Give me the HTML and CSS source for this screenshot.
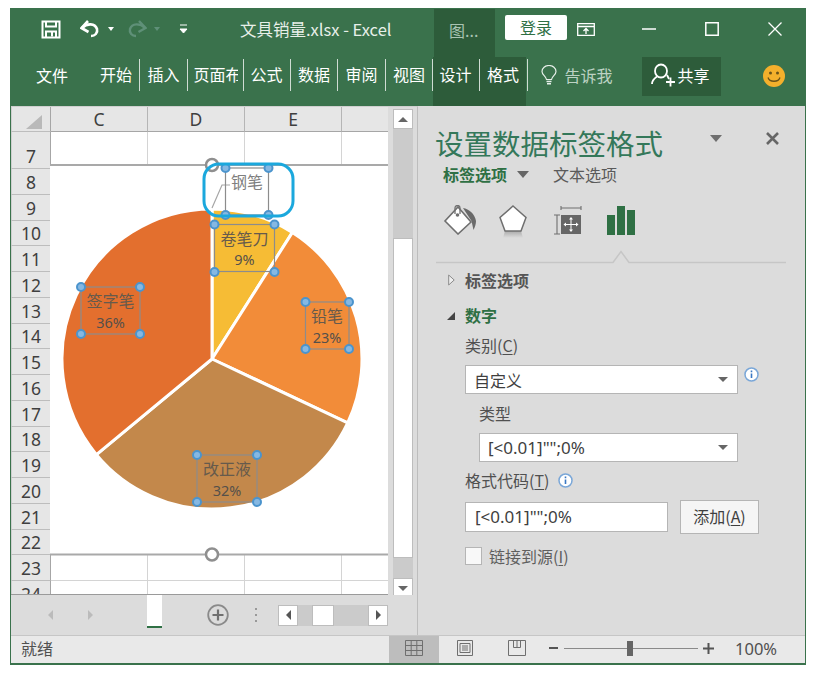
FILE: index.html
```html
<!DOCTYPE html>
<html lang="zh">
<head>
<meta charset="utf-8">
<title>文具销量.xlsx - Excel</title>
<link rel="stylesheet" href="styles.css">
</head>
<body>
<div class="window">
  <header class="titlebar">
    <svg class="qa-save" width="20" height="19" viewBox="0 0 20 19"><path d="M1.500 1.500h17v16h-17z" fill="none" stroke="#fff" stroke-width="2"/><path d="M5 1.500v5h10v-5" fill="none" stroke="#fff" stroke-width="2"/><path d="M5 17.500v-6h10v6M11 12.500v4" fill="none" stroke="#fff" stroke-width="2"/></svg>
    <svg class="qa-undo" width="21" height="18" viewBox="0 0 21 18"><path d="M2 8c5-5 13-5 15 1 1 4-2 7-6 7" fill="none" stroke="#fff" stroke-width="2.600"/><path d="M8 1L1.500 8l7 4" fill="none" stroke="#fff" stroke-width="2.600"/></svg>
    <i class="caret qa-caret"></i>
    <svg class="qa-redo" width="21" height="18" viewBox="0 0 21 18"><path d="M19 8C14 3 6 3 4 9c-1 4 2 7 6 7" fill="none" stroke="#5f9078" stroke-width="2.400"/><path d="M13 1l6.500 7-7 4" fill="none" stroke="#5f9078" stroke-width="2.400"/></svg>
    <i class="caret caret-dim qa-caret"></i>
    <svg class="qa-custom" width="9" height="10" viewBox="0 0 9 10"><path d="M1 1h7M1 5h7L4.500 9z" fill="#fff" stroke="#fff"/></svg>
    <div class="doc-title">文具销量.xlsx - Excel</div>
    <div class="context-tab">图...</div>
    <div class="login">登录</div>
    <svg class="win-display" width="18" height="13" viewBox="0 0 18 13"><path d="M.7.700h16.600v11.600H.7zM.7 3.500h16.600M9 11V6M6.500 8l2.500-2.500L11.500 8" fill="none" stroke="#fff" stroke-width="1.300"/></svg>
    <svg class="win-min" width="14" height="2" viewBox="0 0 14 2"><path d="M0 1h14" stroke="#fff" stroke-width="1.500"/></svg>
    <svg class="win-max" width="14" height="14" viewBox="0 0 14 14"><path d="M.8.800h12.400v12.400H.8z" fill="none" stroke="#fff" stroke-width="1.500"/></svg>
    <svg class="win-close" width="14" height="14" viewBox="0 0 14 14"><path d="M.5.500l13 13M13.500.500l-13 13" stroke="#fff" stroke-width="1.300"/></svg>
  </header>
  <nav class="ribbon">
    <span class="rtab rtab-file">文件</span>
    <span class="rtab rtab-sep">开始</span>
    <span class="rtab rtab-sep">插入</span>
    <span class="rtab rtab-sep rtab-page"><span class="clip">页面布</span></span>
    <span class="rtab rtab-sep">公式</span>
    <span class="rtab rtab-sep">数据</span>
    <span class="rtab rtab-sep">审阅</span>
    <span class="rtab rtab-sep">视图</span>
    <span class="context-group">
      <span class="rtab rtab-sep rtab-ctx">设计</span>
      <span class="rtab rtab-sep rtab-ctx">格式</span>
    </span>
    <svg class="bulb" width="16" height="20" viewBox="0 0 16 20"><path d="M5.500 14.500C5 11 1 10 1 6.500a7 6 0 0 1 14 0C15 10 11 11 10.500 14.500z" fill="none" stroke="#e6efe9" stroke-width="1.200"/><path d="M5.500 16.500h5M6 18.800h4" stroke="#e6efe9" stroke-width="1.400"/></svg>
    <span class="tell">告诉我</span>
    <span class="share">
      <svg width="26" height="24" viewBox="0 0 26 24"><ellipse cx="10" cy="8" rx="6" ry="6.500" fill="none" stroke="#fff" stroke-width="1.800"/><path d="M1 21c0-4 3-6 5-7.500M16 12l2 4" fill="none" stroke="#fff" stroke-width="1.800"/><path d="M15 19h9M19.500 14.500v9" stroke="#fff" stroke-width="1.800"/></svg>
      共享
    </span>
    <svg class="smile" width="22" height="22" viewBox="0 0 22 22"><circle cx="11" cy="11" r="11" fill="#f4b02c"/><circle cx="7.500" cy="8" r="1.500" fill="#6b5218"/><circle cx="14.500" cy="8" r="1.500" fill="#6b5218"/><path d="M5 12.500c1.500 5 10.500 5 12 0" fill="none" stroke="#6b5218" stroke-width="1.300"/></svg>
  </nav>

  <div class="workspace">
    <section class="sheet">
      <div class="sheet-top">
        <div class="grid-area">
          <div class="row row-head">
            <div class="rh corner"><svg width="16" height="14" viewBox="0 0 16 14"><path d="M16 0v14H0z" fill="#b9b9b9"/></svg></div>
            <div class="cell ch">C</div><div class="cell ch">D</div><div class="cell ch">E</div><div class="cell ch ch-last"></div>
          </div>
          <div class="row row-7"><div class="rh">7</div><div class="cell"></div><div class="cell"></div><div class="cell"></div><div class="cell cell-last"></div></div>
          <div class="row"><div class="rh">8</div></div>
          <div class="row"><div class="rh">9</div></div>
          <div class="row"><div class="rh">10</div></div>
          <div class="row"><div class="rh">11</div></div>
          <div class="row"><div class="rh">12</div></div>
          <div class="row"><div class="rh">13</div></div>
          <div class="row"><div class="rh">14</div></div>
          <div class="row"><div class="rh">15</div></div>
          <div class="row"><div class="rh">16</div></div>
          <div class="row"><div class="rh">17</div></div>
          <div class="row"><div class="rh">18</div></div>
          <div class="row"><div class="rh">19</div></div>
          <div class="row"><div class="rh">20</div></div>
          <div class="row"><div class="rh">21</div></div>
          <div class="row"><div class="rh">22</div></div>
          <div class="row"><div class="rh">23</div><div class="cell"></div><div class="cell"></div><div class="cell"></div><div class="cell cell-last"></div></div>
          <div class="row"><div class="rh">24</div><div class="cell"></div><div class="cell"></div><div class="cell"></div><div class="cell cell-last"></div></div>

          <svg class="chart" width="338" height="390" viewBox="50 165 338 390">
            <rect x="50" y="165" width="338" height="390" fill="#fff"/>
            <path d="M50 165h338M50 554.500h338" stroke="#a9a9a9" stroke-width="2"/>
            <g stroke="#fff" stroke-width="3">
              <path d="M212 359V209A150 150 0 0 1 292.400 232.400z" fill="#f6bc35"/>
              <path d="M212 359L292.400 232.400A150 150 0 0 1 347.700 422.900z" fill="#f28c39"/>
              <path d="M212 359L347.700 422.900A150 150 0 0 1 96.400 454.600z" fill="#c3884b"/>
              <path d="M212 359L96.400 454.600A150 150 0 0 1 212 209z" fill="#e36f2e"/>
            </g>
            <path d="M212 208l10-23h8" fill="none" stroke="#a6a6a6" stroke-width="1.200"/>
            <g class="lbl-boxes">
              <rect x="225.500" y="168" width="43" height="47"/>
              <rect x="214.500" y="224.500" width="60" height="47"/>
              <rect x="81" y="287" width="59" height="47"/>
              <rect x="305.500" y="302" width="43.500" height="47"/>
              <rect x="197" y="455" width="60" height="47"/>
            </g>
            <g class="lbl">
              <text class="lbl-grey" x="247" y="188">钢笔</text>
              <text x="244.500" y="245">卷笔刀</text>
              <text class="num" x="244.500" y="265">9%</text>
              <text x="110.500" y="307">签字笔</text>
              <text class="num" x="110.500" y="328">36%</text>
              <text x="327" y="322">铅笔</text>
              <text class="num" x="327" y="343">23%</text>
              <text x="227" y="475">改正液</text>
              <text class="num" x="227" y="496">32%</text>
            </g>
            <g class="handles">
              <circle cx="225.500" cy="168" r="4"/><circle cx="268.500" cy="168" r="4"/><circle cx="225.500" cy="215" r="4"/><circle cx="268.500" cy="215" r="4"/>
              <circle cx="214.500" cy="224.500" r="4"/><circle cx="274.500" cy="224.500" r="4"/><circle cx="214.500" cy="272" r="4"/><circle cx="274.500" cy="272" r="4"/>
              <circle cx="81" cy="287" r="4"/><circle cx="140" cy="287" r="4"/><circle cx="81" cy="334" r="4"/><circle cx="140" cy="334" r="4"/>
              <circle cx="305.500" cy="302" r="4"/><circle cx="349" cy="302" r="4"/><circle cx="305.500" cy="349" r="4"/><circle cx="349" cy="349" r="4"/>
              <circle cx="197" cy="455" r="4"/><circle cx="257" cy="455" r="4"/><circle cx="197" cy="502" r="4"/><circle cx="257" cy="502" r="4"/>
            </g>
            <circle class="rot" cx="212" cy="165" r="6"/>
            <circle class="rot" cx="212" cy="554.500" r="6"/>
            <rect x="204" y="164" width="89" height="52" rx="15" fill="none" stroke="#1ba8dd" stroke-width="3"/>
          </svg>
        </div>
        <div class="vscroll">
          <div class="sb-btn"><i class="tri tri-up"></i></div>
          <div class="vtrack"><div class="vthumb"></div></div>
          <div class="sb-btn"><i class="tri tri-down"></i></div>
        </div>
      </div>
      <div class="tabbar">
        <i class="nav-tri nav-left"></i>
        <i class="nav-tri nav-right"></i>
        <div class="sheet-tab"></div>
        <svg class="add-sheet" width="22" height="22" viewBox="0 0 22 22"><circle cx="11" cy="11" r="9.800" fill="none" stroke="#8a8a8a" stroke-width="1.800"/><path d="M11 5.500v11M5.500 11h11" stroke="#6f6f6f" stroke-width="2.200"/></svg>
        <div class="split-dots"><i></i><i></i><i></i></div>
        <div class="hscroll">
          <div class="hbtn"><i class="tri tri-left"></i></div>
          <div class="hthumb"></div>
          <div class="hbtn"><i class="tri tri-right"></i></div>
        </div>
      </div>
    </section>

    <aside class="pane">
      <div class="pane-head">
        <h1>设置数据标签格式</h1>
        <i class="tri-pane"></i>
        <svg class="pane-close" width="13" height="13" viewBox="0 0 13 13"><path d="M1 1l11 11M12 1L1 12" stroke="#666" stroke-width="2.600"/></svg>
      </div>
      <div class="pane-tabs">
        <span class="ptab-on">标签选项</span><i class="tri-tab"></i><span class="ptab-off">文本选项</span>
      </div>
      <div class="pane-icons">
        <svg class="ic-fill" width="34" height="30" viewBox="0 0 34 30"><path d="M20 3c6 1 12 6 13 13 0 3-1 6-2.500 9l-2-9z" fill="#6a6a6a"/><path d="M15 2l13 15-13 12L2 16z" fill="#fff" stroke="#6f6f6f" stroke-width="1.600"/><path d="M12 9V3a2.500 2.500 0 0 1 5 0v6" fill="none" stroke="#6f6f6f" stroke-width="1.300"/><circle cx="14.500" cy="10" r="1.800" fill="#6f6f6f"/></svg>
        <svg class="ic-shape" width="30" height="33" viewBox="0 0 30 33"><defs><linearGradient id="sh" x1="0" y1="0" x2="0" y2="1"><stop offset="0" stop-color="#aaa"/><stop offset="1" stop-color="#ddd"/></linearGradient></defs><path d="M7 26h16l2 7H5z" fill="url(#sh)"/><path d="M15 1l13 11.500-5 13.500H7L2 12.500z" fill="#fff" stroke="#6f6f6f" stroke-width="1.500"/></svg>
        <svg class="ic-size" width="30" height="30" viewBox="0 0 30 30"><path d="M9 3h20M9 1v4M29 1v4M2 10h6M2 29h6M5 10v19" fill="none" stroke="#6f6f6f" stroke-width="1.100"/><rect x="9" y="10" width="20" height="19" fill="#666"/><path d="M19 13v13M12.500 19.500h13" stroke="#fff" stroke-width="1"/><path d="M19 12l2 2.500h-4zM19 27l2-2.500h-4zM11.500 19.500l2.500-2v4zM26.500 19.500l-2.500-2v4z" fill="#fff"/></svg>
        <svg class="ic-bars" width="28" height="30" viewBox="0 0 28 30"><path d="M0 10h8v20H0zM10 1h8v29h-8zM20 5h8v25h-8z" fill="#2f7044"/></svg>
      </div>
      <svg class="pane-rule" width="350" height="14" viewBox="0 0 350 14"><path d="M0 12.500h177l8-11 8 11h157" fill="none" stroke="#c6c6c6" stroke-width="1.500"/></svg>
      <div class="sec sec-label"><svg class="tri-open" width="7" height="12" viewBox="0 0 7 12"><path d="M.7 1l5.500 5-5.500 5z" fill="#eee" stroke="#8a8a8a"/></svg>标签选项</div>
      <div class="sec sec-num"><i class="tri-closed"></i>数字</div>
      <div class="field-label fl-cat">类别(<u>C</u>)</div>
      <div class="sel-row">
        <div class="select sel-cat"><span>自定义</span><i class="tri tri-down"></i></div>
        <svg class="info info-cat" width="15" height="15" viewBox="0 0 15 15"><circle cx="7.500" cy="7.500" r="6.500" fill="#fff" stroke="#7aa7d8" stroke-width="1.500"/><path d="M7.500 6.500v4.500M7.500 3.500v1.700" stroke="#3a78c4" stroke-width="1.600"/></svg>
      </div>
      <div class="field-label fl-type">类型</div>
      <div class="select sel-type"><span>[&lt;0.01]"";0%</span><i class="tri tri-down"></i></div>
      <div class="field-label fl-code"><span>格式代码(<u>T</u>)</span>
        <svg class="info" width="15" height="15" viewBox="0 0 15 15"><circle cx="7.500" cy="7.500" r="6.500" fill="#fff" stroke="#7aa7d8" stroke-width="1.500"/><path d="M7.500 6.500v4.500M7.500 3.500v1.700" stroke="#3a78c4" stroke-width="1.600"/></svg>
      </div>
      <div class="code-row">
        <div class="code-input">[&lt;0.01]"";0%</div>
        <div class="btn-add">添加(<u>A</u>)</div>
      </div>
      <div class="check-row"><i class="check"></i><span>链接到源(<u>I</u>)</span></div>
    </aside>
  </div>

  <footer class="status">
    <span class="ready">就绪</span>
    <div class="view view-on"><svg width="18" height="16" viewBox="0 0 18 16"><path d="M.5.500h17v15H.5zM.5 5.500h17M.5 10.500h17M6.200.500v15M11.800.500v15" fill="none" stroke="#6f6f6f"/></svg></div>
    <div class="view"><svg width="18" height="16" viewBox="0 0 18 16"><path d="M1.500.500h15v15h-15zM4 3.500h10v9H4zM6 6h6M6 8h6M6 10h6" fill="none" stroke="#6f6f6f"/></svg></div>
    <div class="view"><svg width="18" height="16" viewBox="0 0 18 16"><path d="M.5.500h17v15H.5zM5.500.500v7h7v-7M9 .500v7" fill="none" stroke="#6f6f6f"/></svg></div>
    <i class="zoom-minus"></i>
    <div class="zoom-line"><i class="zoom-thumb"></i></div>
    <svg class="zoom-plus" width="11" height="11" viewBox="0 0 11 11"><path d="M0 5.500h11M5.500 0v11" stroke="#555" stroke-width="2"/></svg>
    <span class="zoom-val">100%</span>
  </footer>
</div>
</body>
</html>
```
FILE: styles.css
```css
* { box-sizing: border-box; }
html, body { margin: 0; padding: 0; background: #fff; }
body {
  width: 813px;
  height: 675px;
  padding: 8px 7px 10px 10px;
  font-family: "Noto Sans CJK SC", "Noto Sans", sans-serif;
  overflow: hidden;
}
i { display: block; font-style: normal; }
u { text-underline-offset: 2px; }

.window {
  width: 796px;
  height: 657px;
  display: flex;
  flex-direction: column;
  background: #dcdcdc;
  border: 1px solid #3a724c;
  border-top: 0;
  border-bottom-width: 2px;
}

/* title bar */
.titlebar {
  height: 49px;
  flex: none;
  padding-bottom: 7px;
  display: flex;
  align-items: center;
  background: #3a724c;
  color: #e8efe9;
}
.qa-save { margin-left: 30px; }
.qa-undo { margin-left: 19px; }
.caret { width: 0; height: 0; border: 3px solid transparent; border-top: 4px solid #fff; border-bottom: 0; }
.caret-dim { border-top-color: #5f9078; }
.qa-caret { margin-left: 7px; }
.qa-redo { margin-left: 12px; }
.qa-custom { margin-left: 19px; }
.doc-title { margin-left: 52px; width: 194px; font-size: 16.500px; white-space: nowrap; }
.context-tab {
  align-self: stretch;
  margin: 1px 0 -7px 0;
  width: 61px;
  padding: 9px 0 0 15px;
  background: #2d5c3a;
  color: #a9c3b2;
  font-size: 16px;
  line-height: 24px;
}
.login {
  margin: -3px 0 0 10px;
  width: 62px;
  height: 25px;
  border-radius: 2px;
  background: #fff;
  color: #2f7044;
  font-size: 16px;
  line-height: 24px;
  text-align: center;
}
.win-display { margin-left: 10px; }
.win-min { margin-left: 47px; }
.win-max { margin-left: 49px; }
.win-close { margin-left: 49px; }

/* ribbon */
.ribbon {
  height: 49px;
  flex: none;
  padding-bottom: 13px;
  display: flex;
  align-items: center;
  background: #3a724c;
  color: #fff;
  font-size: 16px;
}
.rtab { flex: none; line-height: 30px; white-space: nowrap; }
.rtab-file { margin-left: 25px; width: 64px; }
.rtab-sep { width: 40px; height: 32px; margin-right: 7.500px; border-right: 1px solid #cfdcd3; }
.rtab-page { width: 50px; margin-left: -1.500px; margin-right: 7px; }
.clip { display: block; width: 44px; overflow: hidden; }
.context-group {
  align-self: stretch;
  margin: 0 0 -13px -8px;
  width: 93px;
  padding: 0 0 13px 7px;
  display: flex;
  align-items: center;
  background: #2d5c3a;
}
.rtab-ctx { width: 40px; }
.context-group .rtab-ctx:last-child { margin-right: 0; width: 41px; }
.bulb { margin-left: 15px; }
.tell { margin-left: 8px; color: #bdd2c4; white-space: nowrap; }
.share {
  align-self: flex-start;
  margin-left: 29px;
  width: 79px;
  height: 39px;
  padding: 0 0 3px 9px;
  display: flex;
  align-items: center;
  gap: 1px;
  background: #2d5c3a;
}
.smile { margin: 2px 0 0 42px; }

/* workspace */
.workspace { flex: 1; min-height: 0; display: flex; }

.sheet {
  width: 407px;
  flex: none;
  display: flex;
  flex-direction: column;
  border-right: 1px solid #bdbdbd;
  border-top: 1px solid #cfcfcf;
}
.sheet-top { height: 488px; flex: none; display: flex; }

.grid-area {
  position: relative;
  width: 377px;
  height: 488px;
  overflow: hidden;
  border-bottom: 1px solid #9a9a9a;
  background: #fff;
}
.row { display: flex; height: 25.750px; }
.row-head { height: 25px; }
.row-7 { height: 37px; }
.rh {
  width: 40px;
  flex: none;
  display: flex;
  align-items: center;
  justify-content: center;
  padding-top: 1px;
  background: #e6e6e6;
  border-right: 1px solid #a6a6a6;
  border-bottom: 1px solid #bdbdbd;
  border-left: 1px solid #cfcfcf;
  color: #3f3f3f;
  font-family: "Noto Sans", sans-serif;
  font-size: 17.500px;
}
.row-7 .rh { padding-top: 12px; }
.row-head .corner { padding: 5px 0 0 5px; }
.cell {
  width: 97px;
  flex: none;
  background: #fff;
  border-right: 1px solid #d4d4d4;
  border-bottom: 1px solid #d4d4d4;
}
.cell-last { width: 47px; border-right: 1px solid #a6a6a6; }
.ch {
  display: flex;
  align-items: center;
  justify-content: center;
  background: #e6e6e6;
  border-right: 1px solid #b5b5b5;
  border-bottom: 1px solid #a6a6a6;
  color: #3f3f3f;
  font-family: "Noto Sans", sans-serif;
  font-size: 17.500px;
}
.ch-last { width: 47px; }

.chart { position: absolute; left: 39px; top: 58px; overflow: visible; }
.lbl-boxes rect { fill: none; stroke: #8c8c8c; stroke-width: 1.200; }
.lbl text { font-family: "Noto Sans CJK SC", sans-serif; font-size: 16px; text-anchor: middle; fill: #665a4c; }
.lbl .num { font-family: "Noto Sans", sans-serif; font-size: 14.500px; fill: #55504a; }
.lbl .lbl-grey { fill: #7f7f7f; }
.handles circle { fill: #86b8e2; stroke: #4b94cd; stroke-width: 2; }
.rot { fill: #fff; stroke: #8f8f8f; stroke-width: 2.500; }

.vscroll { flex: 1; padding: 2px 4px 0 5px; display: flex; flex-direction: column; background: #dcdcdc; }
.sb-btn {
  height: 20px;
  flex: none;
  display: flex;
  align-items: center;
  justify-content: center;
  background: #fff;
  border: 1px solid #bdbdbd;
}
.vtrack { height: 449px; flex: none; padding-top: 109px; background: #cbcbcb; }
.vthumb { height: 320px; background: #fff; border: 1px solid #bdbdbd; }

.tri { width: 0; height: 0; border: 5px solid transparent; }
.tri-up { border-top: 0; border-bottom: 5px solid #666; }
.tri-down { border-bottom: 0; border-top: 5px solid #666; }
.tri-left { border-left: 0; border-right: 5px solid #555; }
.tri-right { border-right: 0; border-left: 5px solid #555; }

.tabbar { flex: 1; min-height: 0; display: flex; align-items: center; background: #dcdcdc; }
.nav-tri { width: 0; height: 0; border: 5px solid transparent; }
.nav-left { margin-left: 37px; border-left: 0; border-right: 5px solid #bbb; }
.nav-right { margin-left: 35px; border-right: 0; border-left: 5px solid #bbb; }
.sheet-tab {
  align-self: flex-start;
  margin-left: 54px;
  width: 15px;
  height: 33px;
  background: #fff;
  border-bottom: 2px solid #2f7044;
}
.add-sheet { margin-left: 45px; }
.split-dots { margin-left: 26px; display: flex; flex-direction: column; gap: 4px; }
.split-dots i { width: 2px; height: 2px; background: #999; }
.hscroll {
  margin-left: 21px;
  width: 110px;
  height: 21px;
  display: flex;
  align-items: center;
  justify-content: space-between;
  position: relative;
  background: #cbcbcb;
}
.hbtn { width: 20px; height: 21px; display: flex; align-items: center; justify-content: center; background: #fff; border: 1px solid #bdbdbd; }
.hthumb { position: absolute; left: 34px; top: 0; width: 22px; height: 21px; background: #fff; border: 1px solid #bdbdbd; }

/* format pane */
.pane { flex: 1; min-width: 0; padding-left: 18px; color: #505050; font-size: 16px; }
.pane-head { height: 57px; padding-top: 16px; display: flex; align-items: center; }
.pane-head h1 { margin: 0 0 0 -1px; width: 281px; color: #34785a; font-size: 28.500px; font-weight: 400; line-height: 30px; white-space: nowrap; }
.tri-pane { width: 0; height: 0; border: 6px solid transparent; border-bottom: 0; border-top: 7px solid #6f6f6f; margin: -8px 0 0 -6px; }
.pane-close { margin: -8px 0 0 44px; }
.pane-tabs { height: 22px; padding-left: 7px; display: flex; align-items: center; font-size: 16px; }
.ptab-on { color: #2f7044; font-weight: 700; }
.tri-tab { width: 0; height: 0; margin-left: 10px; border: 6px solid transparent; border-bottom: 0; border-top: 7px solid #666; }
.ptab-off { margin-left: 24px; color: #5a5a5a; }
.pane-icons { height: 61px; padding: 20px 0 0 7px; display: flex; align-items: flex-start; }
.ic-shape { margin-left: 21px; }
.ic-size { margin-left: 24px; }
.ic-bars { margin-left: 25px; }
.pane-rule { display: block; margin-top: 4px; }
.sec { position: relative; padding-left: 29px; font-weight: 700; font-size: 16px; line-height: 22px; }
.sec-label { margin-top: 5px; color: #555; }
.sec-num { margin-top: 13px; color: #2f7044; }
.tri-open { position: absolute; left: 12px; top: 5px; }
.tri-closed { position: absolute; left: 11px; top: 8px; width: 0; height: 0; border-left: 8px solid transparent; border-bottom: 8px solid #444; }
.field-label { padding-left: 29px; line-height: 22px; white-space: nowrap; }
.fl-cat { margin-top: 8px; }
.sel-row { margin: 9px 0 0 29px; display: flex; align-items: flex-start; }
.select {
  display: flex;
  align-items: center;
  justify-content: space-between;
  padding: 0 9px 0 8px;
  background: #fff;
  border: 1px solid #b5b5b5;
  color: #3f3f3f;
  font-size: 16px;
}
.sel-cat { width: 273px; height: 29px; }
.info-cat { margin-left: 6px; margin-top: 2px; }
.fl-type { margin-top: 8px; padding-left: 43px; }
.sel-type { margin: 9px 0 0 43px; width: 259px; height: 29px; font-family: "Noto Sans", sans-serif; font-size: 17px; }
.fl-code { margin-top: 7px; display: flex; align-items: center; gap: 9px; }
.code-row { margin: 9px 0 0 29px; display: flex; align-items: center; gap: 12px; }
.code-input {
  width: 203px;
  height: 30px;
  padding-left: 9px;
  background: #fff;
  border: 1px solid #b5b5b5;
  color: #3f3f3f;
  font-family: "Noto Sans", sans-serif;
  font-size: 17px;
  line-height: 27px;
}
.btn-add {
  width: 79px;
  height: 34px;
  background: #f5f5f5;
  border: 1px solid #b5b5b5;
  color: #3f3f3f;
  line-height: 31px;
  text-align: center;
}
.check-row { margin: 10px 0 0 29px; display: flex; align-items: center; gap: 7px; color: #5f5f5f; }
.check { width: 17px; height: 18px; background: #f8f8f8; border: 1px solid #b5b5b5; }

/* status bar */
.status {
  height: 28px;
  flex: none;
  padding-bottom: 3px;
  display: flex;
  align-items: center;
  background: #e9e9e9;
  border-top: 1px solid #c6c6c6;
  color: #505050;
  font-size: 16px;
}
.ready { margin-left: 10px; width: 368px; }
.view { width: 50px; align-self: stretch; margin-bottom: -3px; padding-bottom: 3px; display: flex; align-items: center; justify-content: center; }
.view-on { background: #bdbdbd; }
.view + .view { width: 52px; }
.zoom-minus { margin-left: 6px; width: 9px; height: 2px; background: #555; }
.zoom-line { position: relative; margin-left: 6px; width: 134px; height: 1px; background: #8a8a8a; }
.zoom-thumb { position: absolute; left: 63px; top: -7px; width: 6px; height: 15px; background: #666; }
.zoom-plus { margin-left: 5px; }
.zoom-val { margin-left: 21px; font-family: "Noto Sans", sans-serif; font-size: 16.500px; }
```
